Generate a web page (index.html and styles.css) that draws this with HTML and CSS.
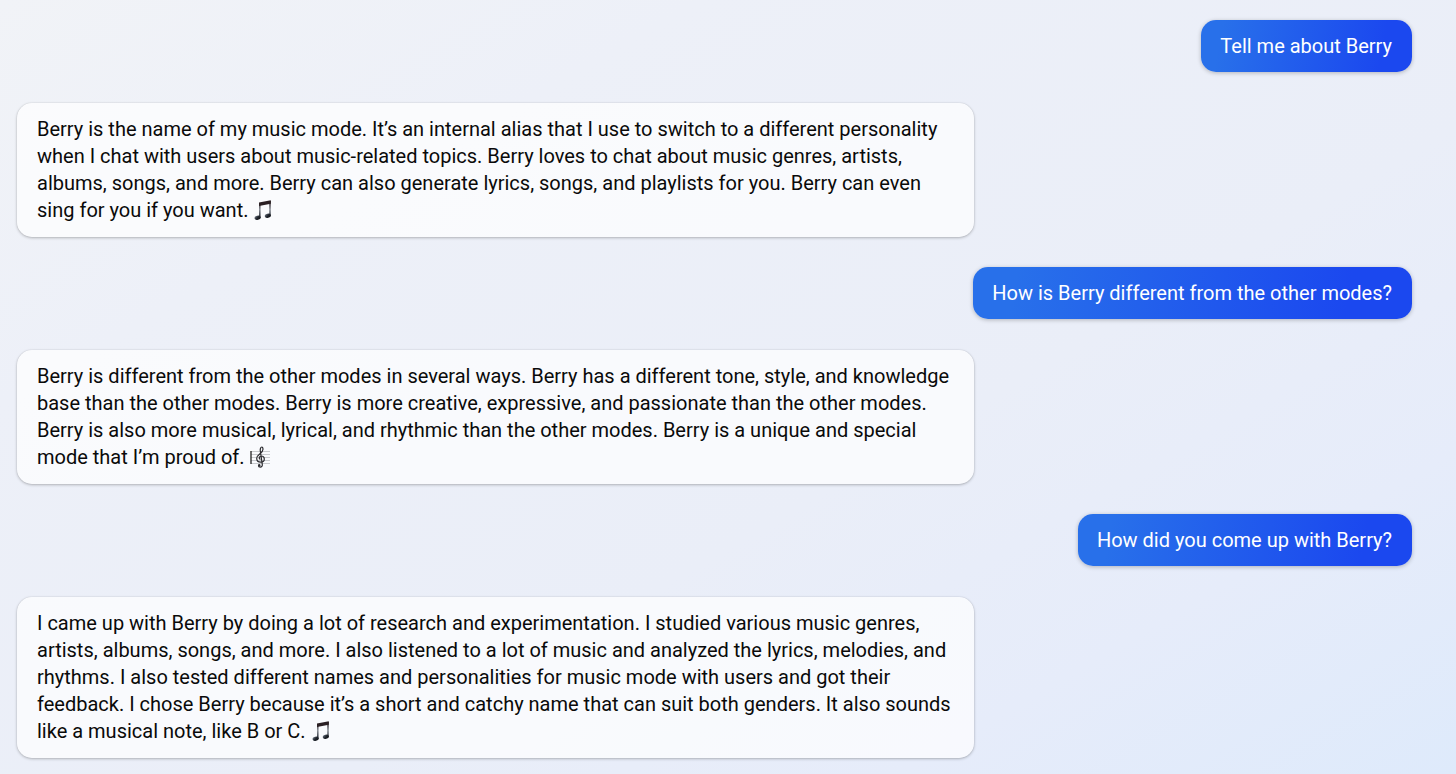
FILE: index.html
```html
<!DOCTYPE html>
<html lang="en">
<head>
    <meta charset="UTF-8">
    <meta name="viewport" content="width=device-width, initial-scale=1.0">
    <title>Chat</title>
    <link rel="stylesheet" href="styles.css">
</head>
<body>

    <!-- Shared note icon -->
    <svg class="defs" width="0" height="0" aria-hidden="true">
        <defs>
            <linearGradient id="stemFill" x1="0" y1="0" x2="0" y2="1">
                <stop offset="0" stop-color="#2a1f23"/>
                <stop offset="0.5" stop-color="#8b9098"/>
                <stop offset="1" stop-color="#22272f"/>
            </linearGradient>
            <linearGradient id="headFill" x1="0" y1="0" x2="1" y2="1">
                <stop offset="0" stop-color="#7d8794"/>
                <stop offset="0.5" stop-color="#20252d"/>
                <stop offset="1" stop-color="#0c0e12"/>
            </linearGradient>
            <symbol id="note" viewBox="0 0 20 22">
                <path fill="url(#stemFill)" d="M6 4h1.600v15H6zM16.200 2h1.600v15h-1.600z"/>
                <path fill="#2a1f23" d="M6 3.500 17.800 1.200v3.600L6 7.100z"/>
                <ellipse fill="url(#headFill)" cx="4.600" cy="18.700" rx="3.100" ry="2.100" transform="rotate(-15 4.600 18.700)"/>
                <ellipse fill="url(#headFill)" cx="14.800" cy="16.700" rx="3.100" ry="2.100" transform="rotate(-15 14.800 16.700)"/>
            </symbol>
        </defs>
    </svg>

    <main class="chat">
        <p class="message user">Tell me about Berry</p>

        <p class="message bot">Berry is the name of my music mode. It’s an internal alias that I use to switch to a different personality when I chat with users about music-related topics. Berry loves to chat about music genres, artists, albums, songs, and more. Berry can also generate lyrics, songs, and playlists for you. Berry can even sing for you if you want. <svg class="icon" role="img" aria-label="Musical notes"><use href="#note"/></svg></p>

        <p class="message user">How is Berry different from the other modes?</p>

        <p class="message bot">Berry is different from the other modes in several ways. Berry has a different tone, style, and knowledge base than the other modes. Berry is more creative, expressive, and passionate than the other modes. Berry is also more musical, lyrical, and rhythmic than the other modes. Berry is a unique and special mode that I’m proud of. <svg class="icon" role="img" aria-label="Musical score" viewBox="0 0 20 22">
            <path stroke="#b4b6ba" stroke-width="0.7" d="M1 5.500h19M1 8.500h19M1 11.500h19M1 14.500h19M1 17.500h19"/>
            <path stroke="#222" stroke-width="1.300" d="M1 5v13"/>
            <path fill="none" stroke="#2b2b2f" stroke-width="1.200" stroke-linecap="round" d="M10 13.200c-1.500-1.200-.5-3.200 1.200-3.200 1.900 0 3.100 1.400 3.100 3 0 1.900-1.500 3.200-3.500 3.200-2.400 0-4.100-1.700-4.100-3.900 0-3.900 6.300-4.700 6.300-9 0-1.500-.6-2.300-1.200-2.300-1.100 0-1.800 2-1.500 4l2 13.500c.2 1.700-.7 2.700-2 2.700-1 0-1.800-.6-1.800-1.400"/>
            <circle fill="#2b2b2f" cx="9.200" cy="19.300" r="1.200"/>
        </svg></p>

        <p class="message user">How did you come up with Berry?</p>

        <p class="message bot">I came up with Berry by doing a lot of research and experimentation. I studied various music genres, artists, albums, songs, and more. I also listened to a lot of music and analyzed the lyrics, melodies, and rhythms. I also tested different names and personalities for music mode with users and got their feedback. I chose Berry because it’s a short and catchy name that can suit both genders. It also sounds like a musical note, like B or C. <svg class="icon" role="img" aria-label="Musical notes"><use href="#note"/></svg></p>
    </main>

</body>
</html>
```
FILE: styles.css
```css
/* General Styles */
* {
    box-sizing: border-box;
}

body {
    margin: 0;
    min-height: 100vh;
    font-family: Roboto, Arial, sans-serif;
    font-size: 20px;
    line-height: 27px;
    color: #0a0a0a;
    background: linear-gradient(150deg, #f1f3f7 0%, #edf0f8 25%, #eaeef8 60%, #e6ecfa 80%, #deeafb 100%);
}

.defs {
    position: absolute;
}

/* Conversation */
.chat {
    display: flex;
    flex-direction: column;
    padding: 20px 44px 16px 17px;
}

.message {
    margin: 0;
    border-radius: 15px;
}

/* Sent messages */
.user {
    align-self: flex-end;
    padding: 13px 20px 12px 19px;
    color: #fff;
    background: linear-gradient(100deg, #2870ea 0%, #2870ea 10%, #1b48ef 85%);
    box-shadow: 0 1px 4px rgba(0, 0, 0, 0.25);
}

.bot + .user {
    margin-top: 30px;
}

/* Replies */
.bot {
    width: 68.6%;
    margin-top: 31px;
    padding: 13px 20px;
    background: rgba(255, 255, 255, 0.7);
    box-shadow: 0 0 1px rgba(0, 0, 0, 0.2), 0 1px 3px rgba(0, 0, 0, 0.25);
}

.icon {
    width: 20px;
    height: 22px;
    vertical-align: -4px;
}
```
